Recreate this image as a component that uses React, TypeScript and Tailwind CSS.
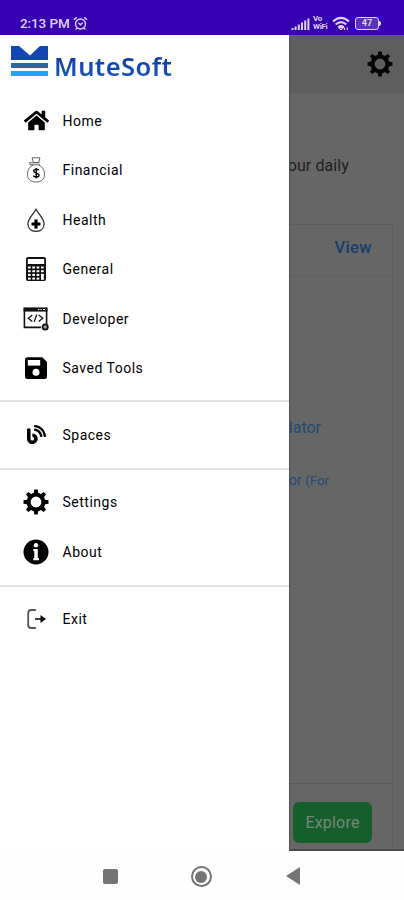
import type { ReactNode } from "react";
import { FaBlog, FaHome } from "react-icons/fa";

type MenuItem = {
  label: string;
  icon: ReactNode;
};

const teeth = [0, 45, 90, 135, 180, 225, 270, 315];

function GearIcon() {
  return (
    <svg viewBox="0 0 26 26" className="size-[26px]">
      <circle cx="13" cy="13" r="7.4" fill="none" stroke="currentColor" strokeWidth="4" />
      {teeth.map((angle) => (
        <path
          key={angle}
          d="M10.6 5.2 11.3.5h3.4l.7 4.7z"
          fill="currentColor"
          transform={`rotate(${angle} 13 13)`}
        />
      ))}
    </svg>
  );
}

function MoneyBagIcon() {
  return (
    <svg viewBox="0 0 26 26" className="size-[26px]" fill="none" stroke="#555" strokeWidth="0.9">
      <path d="M9 .8h8l-1.3 4.7h-5.2zM6.5 5.800h10M7 7.800h10M6.400 5.300l1 2.600" />
      <path d="M10 8C6.500 10 4.500 13 4.500 17c0 5.200 3 8 8.500 8s8.500-2.800 8.500-8c0-4-2-7-5.500-9" />
      <path d="M15.700 13.200c-1-1.500-5-1.300-5 .8 0 2.600 5.300 1.500 5.300 4.200 0 2.300-4.500 2.500-5.700.5M13.200 11v10.300" stroke="#000" strokeWidth="1.400" />
    </svg>
  );
}

function DropIcon() {
  return (
    <svg viewBox="0 0 26 26" className="size-[26px]">
      <path
        d="M13 2.200C10.500 7 4.900 11.800 4.900 17c0 4.500 3.200 7.400 8.100 7.400s8.100-2.900 8.100-7.400C21.100 11.800 15.500 7 13 2.200z"
        fill="none"
        stroke="#222"
        strokeWidth="1.200"
      />
      <path d="M13 12.500v9M8.500 17h9" stroke="#000" strokeWidth="3.200" />
    </svg>
  );
}

function CalculatorIcon() {
  return (
    <svg viewBox="0 0 26 26" className="size-[26px]">
      <rect x="3" y="1" width="20" height="24" rx="2" fill="#111" />
      <rect x="4.800" y="3" width="16.400" height="5" fill="white" />
      {[10.5, 14.2, 17.9, 21.6].map((y) =>
        [5, 9.3, 13.6, 18].map((x) => (
          <rect key={`${x}-${y}`} x={x} y={y} width="2.700" height="2" fill="white" />
        ))
      )}
      <rect x="18" y="17.900" width="2.700" height="5.700" fill="white" />
    </svg>
  );
}

function CodeWindowIcon() {
  return (
    <svg viewBox="0 0 26 26" className="size-[26px]" fill="none" stroke="#111">
      <path d="M18 21.400H1.400V2.200h22.200v16" strokeWidth="1.600" />
      <path d="M.6 3.700h23.800" strokeWidth="3.800" />
      <path d="M15 3.500h1.300M17.500 3.500h1.300M20 3.500h2.200" stroke="white" strokeWidth="1.100" />
      <path d="m9.300 9-4 3.200 4 3.200M15.700 9l4 3.200-4 3.200M13.800 8.500l-2.600 7.400" strokeWidth="1.300" />
      <circle cx="22.200" cy="21" r="2.600" fill="#999" strokeWidth="1.800" />
    </svg>
  );
}

function FloppyIcon() {
  return (
    <svg viewBox="0 0 26 26" className="size-[26px]">
      <path d="M4.500 2.200h14.800l4.700 4.700v14.500a2.500 2.500 0 0 1-2.500 2.500h-17A2.500 2.500 0 0 1 2 21.400V4.700a2.500 2.500 0 0 1 2.500-2.500z" />
      <path d="M4.800 5h12.400v5.600H4.800z" fill="white" />
      <circle cx="13" cy="17.300" r="3.500" fill="white" />
    </svg>
  );
}

function InfoIcon() {
  return (
    <svg viewBox="0 0 26 26" className="size-[26px]">
      <circle cx="13" cy="13" r="12.500" />
      <circle cx="13" cy="6.300" r="2.200" fill="white" />
      <path d="M10.300 10h4.500v9h1.200v2.300h-5.700V19h1V12.200h-1z" fill="white" />
    </svg>
  );
}

function ExitIcon() {
  return (
    <svg viewBox="0 0 26 26" className="size-[26px]">
      <path
        d="M12.800 4H8.300Q5.200 4 5.200 7v12Q5.200 22 8.300 22h4.500"
        fill="none"
        stroke="#555"
        strokeWidth="1.800"
      />
      <path d="M12 12.200h5.500V9l5.500 4-5.500 4v-3.200H12z" />
    </svg>
  );
}

const groups: MenuItem[][] = [
  [
    { label: "Home", icon: <FaHome className="size-[25px]" /> },
    { label: "Financial", icon: <MoneyBagIcon /> },
    { label: "Health", icon: <DropIcon /> },
    { label: "General", icon: <CalculatorIcon /> },
    { label: "Developer", icon: <CodeWindowIcon /> },
    { label: "Saved Tools", icon: <FloppyIcon /> },
  ],
  [{ label: "Spaces", icon: <FaBlog className="size-[19px]" /> }],
  [
    { label: "Settings", icon: <GearIcon /> },
    { label: "About", icon: <InfoIcon /> },
  ],
  [{ label: "Exit", icon: <ExitIcon /> }],
];

function StatusBar() {
  return (
    <header className="flex h-[35px] items-start bg-[#3700b3] pt-[15px] pr-[23px] pl-[20px] text-[#ded3f5]">
      <span className="text-[13.5px] leading-[17px] font-medium tracking-[-0.1px] whitespace-nowrap">2:13 PM</span>
      <svg viewBox="0 0 16 16" className="mt-px ml-[3px] size-[15px]" fill="none" stroke="currentColor" strokeWidth="1.500">
        <circle cx="8" cy="8.500" r="5.300" />
        <path d="m1 4 3-2.500M15 4l-3-2.500M5.800 7.500 8 9.300l2.300-2M4 13l-1.200 1.500M12 13l1.200 1.500" />
      </svg>
      <div className="ml-auto flex items-center">
        <svg viewBox="0 0 19 13" className="h-[13px] w-[19px]" stroke="currentColor" strokeWidth="2">
          <path d="M1.500 13v-2M4.600 13V9.500M7.800 13V7.500M11 13V5.500M14.200 13V3.500M17.400 13V1.500" />
        </svg>
        <div className="ml-[3px] flex w-[18px] flex-col text-[8px] leading-[8px] font-bold tracking-[-0.3px]">
          <span>Vo</span>
          <span>WiFi</span>
        </div>
        <svg viewBox="0 0 18 14" className="ml-px h-[14px] w-[18px]" fill="none" stroke="currentColor" strokeWidth="2.200">
          <path d="M1 5.500q8-7.200 16 0M3.700 8.500q5.300-4.600 10.600 0M6.300 11.200q2.700-2.200 5.400 0" />
          <path d="m9 14-2-2.500h4zM12.500 11.500v2.500M15.300 14v-2.500" strokeWidth="1.200" />
        </svg>
        <div className="ml-[5px] flex h-[13px] w-[24px] items-center justify-center rounded-[3px] border border-[#ded3f5] bg-[#5a2fc2] text-[9px] leading-none font-bold">
          47
        </div>
        <div className="h-[5px] w-[2px] rounded-r-sm bg-[#ded3f5]" />
      </div>
    </header>
  );
}

function Drawer() {
  return (
    <aside className="w-[289px] shrink-0 bg-white">
      <div className="flex h-[61px] items-start pt-[11px] pl-[11px]">
        <svg viewBox="0 0 37 30" className="h-[30px] w-[37px]">
          <path d="M0 0h8l11 9.500L29 0h8v14H0z" fill="#1247b3" />
          <path d="M0 17h37v5H0z" fill="#2867a8" />
          <path d="M0 25h37v5H0z" fill="#1ba7f2" />
        </svg>
        <span className="mt-[3px] ml-[6px] bg-linear-to-b from-[#0a2f9e] to-[#205fc0] bg-clip-text font-['Noto_Sans'] text-[25.5px] leading-[34px] font-semibold tracking-[0.45px] text-transparent">
          MuteSoft
        </span>
      </div>
      <nav>
        {groups.map((group, index) => (
          <ul
            key={index}
            className={
              index === 0
                ? "pb-[7px]"
                : "border-t-2 border-[#e2e2e2] py-2"
            }
          >
            {group.map((item) => (
              <li key={item.label} className="flex h-[49.5px] items-center pl-[23px]">
                <span className="flex w-[26px] justify-center">{item.icon}</span>
                <span className="ml-[13.5px] text-[14px] leading-5 tracking-[0.5px] text-black">
                  {item.label}
                </span>
              </li>
            ))}
          </ul>
        ))}
      </nav>
    </aside>
  );
}

function DimmedPage() {
  return (
    <main className="flex min-w-0 flex-1 flex-col overflow-hidden border-b-2 border-l border-b-[#4c4c4c] border-l-[#505050] bg-[#666]">
      <div className="flex h-[59px] shrink-0 justify-end border-b border-[#616161] bg-[#5e5e5e] pt-4 pr-[11px] text-[#050505]">
        <GearIcon />
      </div>
      <div className="flex h-[130px] shrink-0 justify-end pt-[62px] pr-[55px]">
        <span className="text-[16px] leading-5 tracking-[0.1px] whitespace-nowrap text-[#202020]">our daily</span>
      </div>
      <section className="mr-[11px] flex flex-1 flex-col border-t border-r border-[#5d5d5d]">
        <div className="flex h-[52px] justify-end border-b border-[#5f5f5f] pt-[11px] pr-[20px]">
          <span className="text-[16.5px] leading-6 font-medium tracking-[0.4px] text-[#153f6d]">View</span>
        </div>
        <div className="flex flex-1 flex-col items-end border-b border-[#5a5a5a] pt-[139px] text-[#234a78]">
          <span className="mr-[71px] text-[16px] leading-6 whitespace-nowrap">lator</span>
          <span className="mt-[28px] mr-[63px] text-[14.5px] leading-6 tracking-[-0.1px] whitespace-nowrap">
            or <span className="text-[13.5px]">(For</span>
          </span>
        </div>
        <div className="flex h-[65px] shrink-0 items-start pt-[18px] pl-[3px]">
          <button
            type="button"
            className="h-[41px] w-[79px] rounded-[6px] bg-[#165f2d] text-[16px] tracking-[0.2px] text-[#758878]"
          >
            Explore
          </button>
        </div>
      </section>
    </main>
  );
}

function NavigationBar() {
  return (
    <footer className="grid h-[49px] grid-cols-[110px_182px_112px] bg-[#fefefe]">
      <div className="flex justify-end pt-[18px]">
        <div className="-mr-[8px] size-[15px] rounded-[2px] bg-[#747474]" />
      </div>
      <div className="flex justify-center pt-[15px]">
        <div className="flex size-[21px] items-center justify-center rounded-full border-2 border-[#747474]">
          <div className="size-[12px] rounded-full bg-[#747474]" />
        </div>
      </div>
      <svg viewBox="0 0 14 18" className="mt-[16px] -ml-[6px] h-[18px] w-[14px]">
        <path d="M0 9 14 0v18z" fill="#747474" />
      </svg>
    </footer>
  );
}

export default function App() {
  return (
    <div className="flex h-[900px] w-[404px] flex-col overflow-hidden bg-white font-[Roboto,sans-serif]">
      <StatusBar />
      <div className="flex h-[816px] shrink-0">
        <Drawer />
        <DimmedPage />
      </div>
      <NavigationBar />
    </div>
  );
}
